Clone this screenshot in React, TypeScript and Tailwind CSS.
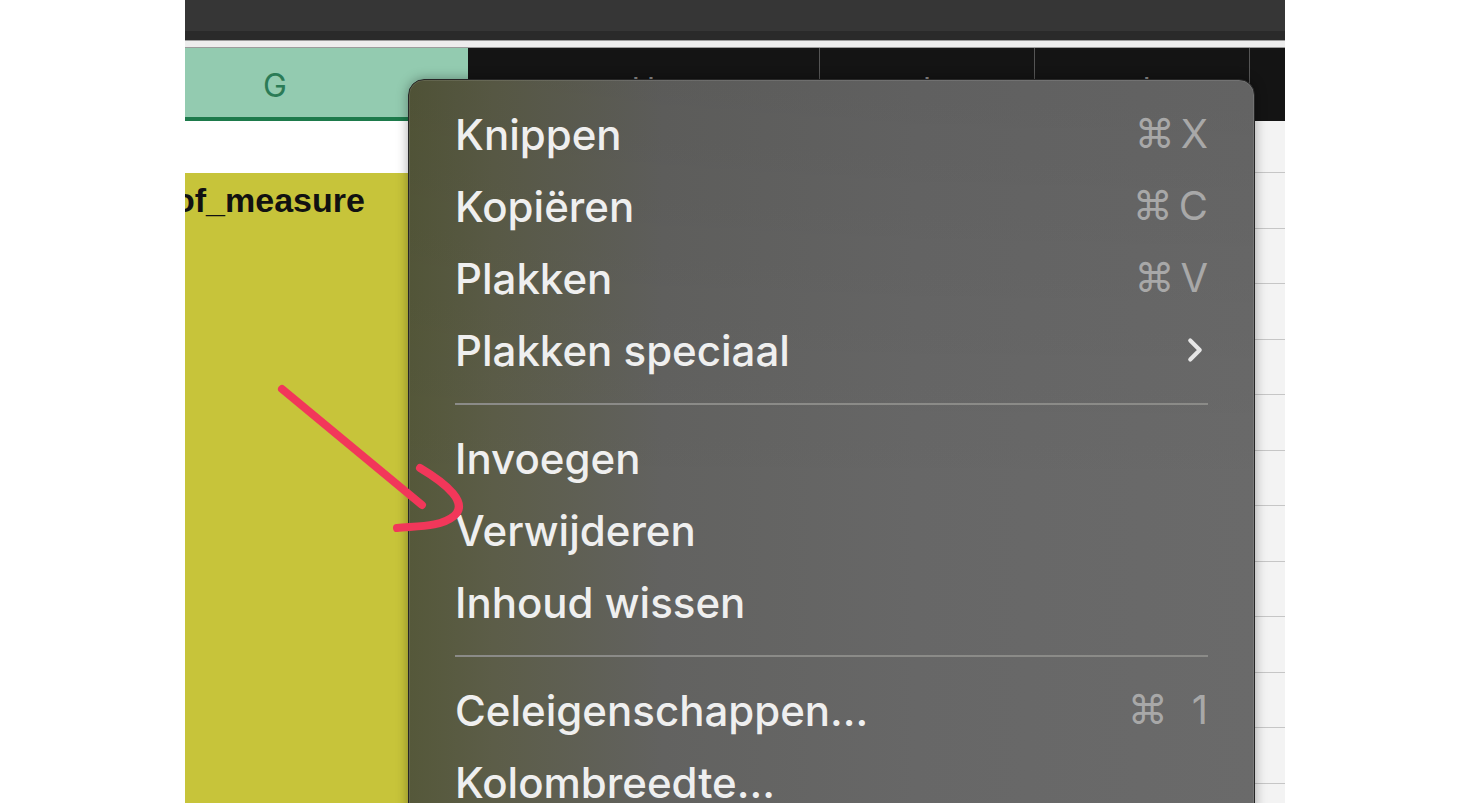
import { ChevronRight } from 'lucide-react';

type Item = { label: string; shortcut?: string; submenu?: boolean };

const groups: Item[][] = [
  [
    { label: 'Knippen', shortcut: 'X' },
    { label: 'Kopiëren', shortcut: 'C' },
    { label: 'Plakken', shortcut: 'V' },
    { label: 'Plakken speciaal', submenu: true },
  ],
  [{ label: 'Invoegen' }, { label: 'Verwijderen' }, { label: 'Inhoud wissen' }],
  [{ label: 'Celeigenschappen...', shortcut: '1' }, { label: 'Kolombreedte...' }],
];

const bodyRows = Array.from({ length: 12 }, (_, i) => i);

function Shortcut({ keyName }: { keyName: string }) {
  return (
    <span className="flex items-center gap-[6px] text-[40px] font-normal text-[#a8a8a8]">
      <span className="font-['DejaVu_Sans',sans-serif] text-[40px]">⌘</span>
      {keyName === '1' && <span className="w-[12px]" />}
      <span>{keyName}</span>
    </span>
  );
}

function ContextMenu() {
  return (
    <div className="absolute left-[223px] top-[79px] h-[760px] w-[847px] rounded-[16px] border border-[#262626] bg-[linear-gradient(to_bottom,rgba(0,0,0,0.07),rgba(0,0,0,0)_55%),linear-gradient(to_right,#55583a_0%,#5c5d48_10%,#626260_30%,#676767_60%,#6a6a6a_100%)] pl-[46px] pr-[46px] pt-[18px] shadow-[inset_0_0_0_1px_rgba(255,255,255,0.1),0_0_12px_rgba(0,0,0,0.35)]">
      {groups.map((group, gi) => (
        <div key={gi}>
          {gi > 0 && <div className="my-[17px] h-[2px] bg-[#8b8b88]" />}
          {group.map((item) => (
            <div
              key={item.label}
              className="flex h-[72px] items-center justify-between text-[42px] font-medium text-[#efefef]"
            >
              <span>{item.label}</span>
              {item.shortcut && <Shortcut keyName={item.shortcut} />}
              {item.submenu && (
                <ChevronRight className="mr-[-6px] h-[38px] w-[38px] text-[#e6e6e6]" strokeWidth={2.6} />
              )}
            </div>
          ))}
        </div>
      ))}
    </div>
  );
}

export default function App() {
  return (
    <div className="flex h-[803px] w-[1470px] overflow-hidden bg-white font-['Inter','DejaVu_Sans',sans-serif]">
      <div className="w-[185px] shrink-0" />
      <div className="relative flex w-[1100px] shrink-0 flex-col overflow-hidden">
        {/* Title / toolbar strip */}
        <div className="h-[31px] shrink-0 bg-[#363636]" />
        <div className="h-[9px] shrink-0 bg-[#2a2a2a]" />
        <div className="h-[8px] shrink-0 border-y border-[#9c9c9c] bg-[#ededed]" />

        {/* Column headers */}
        <div className="flex h-[73px] shrink-0">
          <div className="flex w-[283px] shrink-0 items-center border-b-[4px] border-[#1d7a4b] bg-[#93cbb0] pl-[78px] pt-[6px] text-[32px] text-[#2b7b56]">
            G
          </div>
          <div className="flex w-[352px] shrink-0 items-center justify-center border-r border-[#555] bg-[#141414] pt-[10px] text-[32px] text-[#8a8a8a]">
            H
          </div>
          <div className="flex w-[215px] shrink-0 items-center justify-center border-r border-[#555] bg-[#141414] pt-[10px] text-[32px] text-[#8a8a8a]">
            I
          </div>
          <div className="flex w-[215px] shrink-0 items-center justify-center border-r border-[#555] bg-[#141414] pt-[10px] text-[32px] text-[#8a8a8a]">
            J
          </div>
          <div className="flex-1 bg-[#141414]" />
        </div>

        {/* Grid */}
        <div className="flex h-[52px] shrink-0">
          <div className="w-[283px] shrink-0 bg-white" />
          <div className="w-[782px] shrink-0 bg-white" />
          <div className="flex-1 border-b border-[#c6c6c6] bg-[#f3f3f3]" />
        </div>
        {bodyRows.map((r) => (
          <div key={r} className="flex h-[55.5px] shrink-0">
            <div className="flex w-[283px] shrink-0 items-center bg-[#c7c43a]">
              {r === 0 && (
                <span className="-ml-[11px] font-['Liberation_Sans',sans-serif] text-[34px] font-bold text-[#111]">
                  of_measure
                </span>
              )}
            </div>
            <div className="w-[782px] shrink-0 border-b border-[#d0d0d0] bg-white" />
            <div className="flex-1 border-b border-[#c6c6c6] bg-[#f3f3f3]" />
          </div>
        ))}

        <ContextMenu />

        {/* Hand-drawn annotation arrow */}
        <svg
          className="pointer-events-none absolute left-0 top-0 h-[803px] w-[1100px]"
          viewBox="0 0 1100 803"
          fill="none"
        >
          <path d="M97 389 L237 505" stroke="#f2375a" strokeWidth="8" strokeLinecap="round" />
          <path
            d="M235 468 C262 484 284 503 269 516 C256 527 232 526 212 528"
            stroke="#f2375a"
            strokeWidth="8"
            strokeLinecap="round"
          />
        </svg>
      </div>
      <div className="flex-1" />
    </div>
  );
}
